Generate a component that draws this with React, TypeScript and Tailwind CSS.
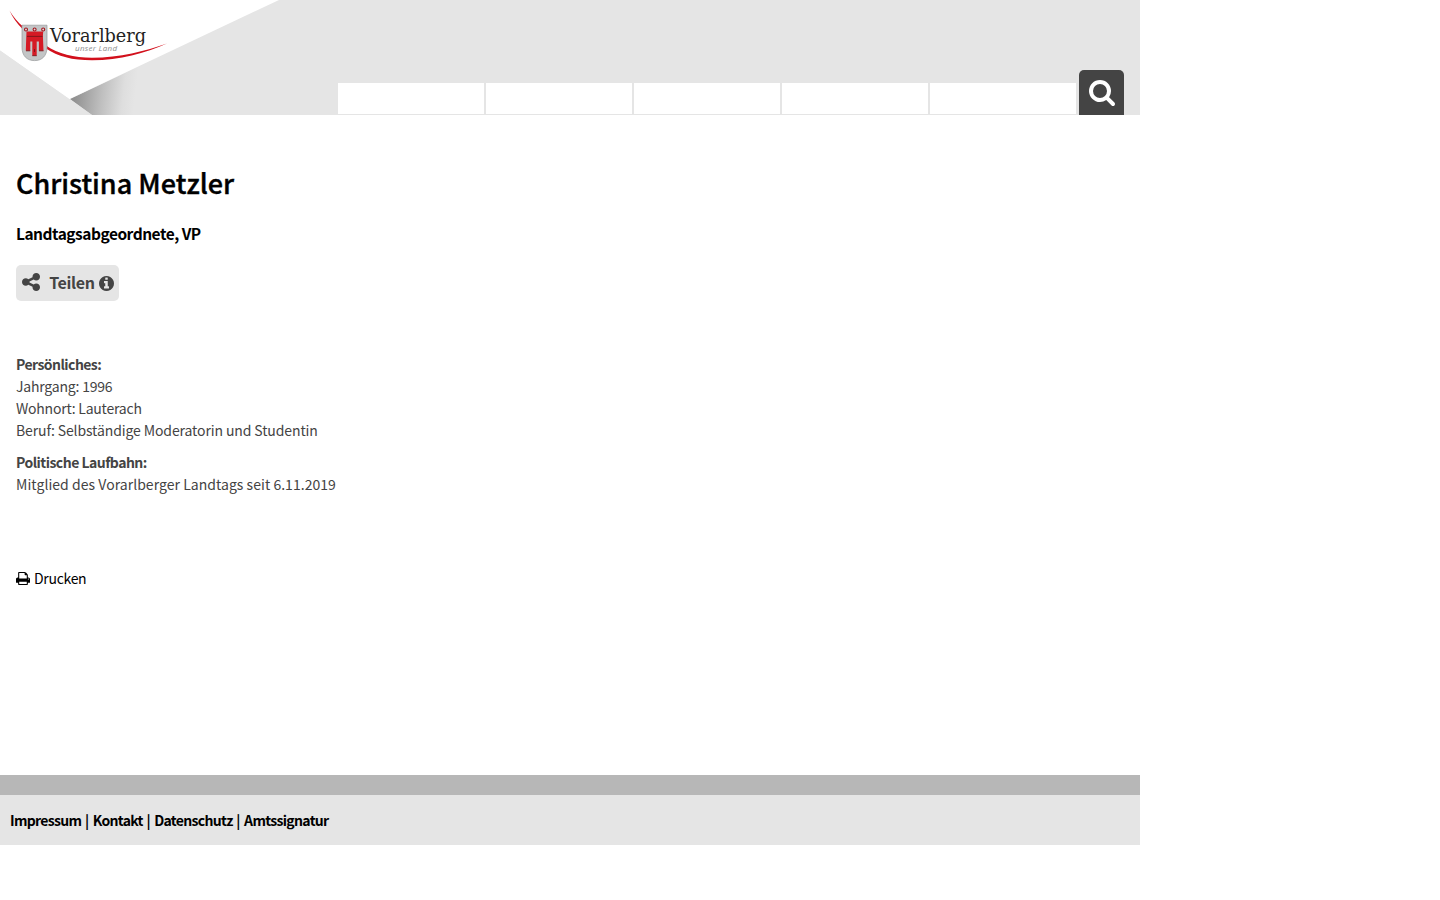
import React from 'react';

type IconProps = {
  path: string;
  viewBox: string;
  className?: string;
};

const SEARCH_PATH =
  'M1216 832q0-185-131.5-316.5t-316.5-131.5-316.5 131.5-131.5 316.5 131.5 316.5 316.5 131.5 316.5-131.5 131.5-316.5zm512 832q0 52-38 90t-90 38q-54 0-90-38l-343-342q-179 124-399 124-143 0-273.5-55.5t-225-150-150-225-55.5-273.5 55.5-273.5 150-225 225-150 273.5-55.5 273.5 55.5 225 150 150 225 55.5 273.5q0 220-124 399l343 343q37 37 37 90z';
const SHARE_PATH =
  'M1344 1024q133 0 226.5 93.5t93.5 226.5-93.5 226.5-226.5 93.5-226.5-93.5-93.5-226.5q0-12 2-34l-360-180q-92 86-218 86-133 0-226.5-93.5t-93.5-226.5 93.5-226.5 226.5-93.5q126 0 218 86l360-180q-2-22-2-34 0-133 93.5-226.5t226.5-93.5 226.5 93.5 93.5 226.5-93.5 226.5-226.5 93.5q-126 0-218-86l-360 180q2 22 2 34t-2 34l360 180q92-86 218-86z';
const INFO_PATH =
  'M1152 1376v-160q0-14-9-23t-23-9h-96v-512q0-14-9-23t-23-9h-320q-14 0-23 9t-9 23v160q0 14 9 23t23 9h96v320h-96q-14 0-23 9t-9 23v160q0 14 9 23t23 9h448q14 0 23-9t9-23zm-128-896v-160q0-14-9-23t-23-9h-192q-14 0-23 9t-9 23v160q0 14 9 23t23 9h192q14 0 23-9t9-23zm640 416q0 209-103 385.5t-279.5 279.5-385.5 103-385.5-103-279.5-279.5-103-385.5 103-385.5 279.5-279.5 385.5-103 385.5 103 279.5 279.5 103 385.5z';
const PRINT_PATH =
  'M448 1536h896v-256h-896v256zm0-640h896v-384h-160q-40 0-68-28t-28-68v-160h-640v640zm1152 64q0-26-19-45t-45-19-45 19-19 45 19 45 45 19 45-19 19-45zm128 0v416q0 13-9.5 22.5t-22.5 9.5h-224v160q0 40-28 68t-68 28h-960q-40 0-68-28t-28-68v-160h-224q-13 0-22.5-9.5t-9.5-22.5v-416q0-79 56.5-135.5t135.5-56.5h64v-544q0-40 28-68t68-28h672q40 0 88 20t76 48l152 152q28 28 48 76t20 88v256h64q79 0 135.5 56.5t56.5 135.5z';

const Icon = ({ path, viewBox, className }: IconProps) => (
  <svg viewBox={viewBox} className={className} fill="currentColor" aria-hidden="true">
    <path d={path} />
  </svg>
);

const Logo = () => (
  <svg width="280" height="115" viewBox="0 0 280 115" className="shrink-0">
    <defs>
      <linearGradient id="fold" gradientUnits="userSpaceOnUse" x1="74" y1="100" x2="134" y2="107">
        <stop offset="0" stopColor="#919191" />
        <stop offset="0.45" stopColor="#bfbfbf" />
        <stop offset="0.8" stopColor="#dedede" />
        <stop offset="1" stopColor="#e5e5e5" />
      </linearGradient>
    </defs>
    <path d="M70 99 L140 66 V115 H92 Z" fill="url(#fold)" />
    <path d="M0 0 H279 L69.5 99 L92 115 L0 50.5 Z" fill="#fff" />
    <path d="M0 50.5 L92 115 H0 Z" fill="#e5e5e5" />
    <g fill="#d2101c">
      <path d="M9.5 10.5 C13 16.5 18 22.5 23 26.5 L22.5 29 C17 23.5 12.5 17.5 9.5 10.5 Z" />
      <path d="M46 45.5 C58 54 74 57.6 92 57.7 C120 57.7 145 51 167 43.5 C145 53 120 60.3 92 60.3 C72 60.2 58 56.5 46 48.5 Z" />
    </g>
    {/* coat of arms */}
    <path d="M22 25.2 H47 V47 C47 56 42 60.6 34.6 60.6 C27 60.6 22 56 22 47 Z" fill="#c3c5c6" stroke="#96999b" strokeWidth="0.7" />
    <path
      d="M26.5 31.5 H43.2 L42.9 36 L43.5 50.8 H38.9 V41.5 H36.7 V55.7 H32.3 V41.5 H30.3 V50.8 H25.8 L26.3 36 Z"
      fill="#d51a25"
    />
    <path d="M27 36.4 H42.5 M26 50.8 H30.3 M39 50.8 H43.5 M32.3 55.7 H36.7 M34.5 49 V52" stroke="#6b1519" strokeWidth="0.8" fill="none" />
    <g fill="#ddd" stroke="#a3141c" strokeWidth="1.1">
      <circle cx="26" cy="29.5" r="1.5" />
      <circle cx="34.6" cy="29.5" r="1.5" />
      <circle cx="43.2" cy="29.5" r="1.5" />
    </g>
    <text x="50" y="41.5" textLength="96" lengthAdjust="spacingAndGlyphs" fontSize="19.2" fill="#222" className="font-['DejaVu_Serif_Condensed','DejaVu_Serif',serif]">
      Vorarlberg
    </text>
    <text x="75" y="51" textLength="42" fontSize="8" fontStyle="italic" fill="#8c8c8c" className="font-['Open_Sans',sans-serif]">
      unser Land
    </text>
  </svg>
);

const App = () => {
  const navItems = [1, 2, 3, 4, 5];
  const links = ['Impressum', 'Kontakt', 'Datenschutz', 'Amtssignatur'];

  return (
    <div className="w-[1140px] bg-white font-['Noto_Sans_CJK_SC',sans-serif] text-[14px] leading-[22px] text-[#444]">
      <header className="flex h-[115px] items-end bg-[#e5e5e5]">
        <Logo />
        <nav className="mb-px ml-[58px] flex gap-0.5">
          {navItems.map((item) => (
            <div key={item} className="h-[31px] w-[146px] bg-white" />
          ))}
        </nav>
        <button className="ml-[3px] flex h-[45px] w-[45px] items-center justify-center rounded-t-[5px] bg-[#444] text-white" aria-label="Suche">
          <Icon path={SEARCH_PATH} viewBox="64 128 1664 1664" className="h-[26px] w-[26px]" />
        </button>
      </header>

      <main className="flex h-[660px] flex-col items-start px-4 pt-[48px]">
        <h1 className="text-[27px] leading-[40px] font-medium whitespace-nowrap text-black [-webkit-text-stroke:0.4px_black]">
          Christina Metzler
        </h1>
        <h2 className="mt-[19px] text-[15.5px] leading-[22px] font-bold tracking-[-0.5px] whitespace-nowrap text-black">Landtagsabgeordnete, VP</h2>
        <button className="mt-[21px] flex h-9 w-[103px] items-center rounded-[5px] bg-[#e5e5e5] pb-0.5 pl-1.5 text-[16px] font-bold">
          <Icon path={SHARE_PATH} viewBox="128 128 1536 1536" className="h-[18px] w-[18px] shrink-0" />
          <span className="ml-[9px] w-[46px] tracking-[-0.3px]">Teilen</span>
          <Icon path={INFO_PATH} viewBox="128 128 1536 1536" className="mt-0.5 ml-1 h-[15px] w-[15px] shrink-0" />
        </button>

        <section className="mt-[52px] whitespace-nowrap">
          <p className="font-bold tracking-[-0.55px]">Persönliches:</p>
          <p className="tracking-[-0.2px]">Jahrgang: 1996</p>
          <p className="tracking-[-0.22px]">Wohnort: Lauterach</p>
          <p className="tracking-[-0.11px]">Beruf: Selbständige Moderatorin und Studentin</p>
        </section>
        <section className="mt-2.5 whitespace-nowrap">
          <p className="font-bold tracking-[-0.52px]">Politische Laufbahn:</p>
          <p className="tracking-[0.04px]">Mitglied des Vorarlberger Landtags seit 6.11.2019</p>
        </section>

        <a className="mt-[72px] flex items-center gap-1 text-black">
          <Icon path={PRINT_PATH} viewBox="64 128 1664 1536" className="h-[13px] w-[14px]" />
          <span className="tracking-[-0.3px]">Drucken</span>
        </a>
      </main>

      <footer>
        <div className="h-5 bg-[#b7b7b7]" />
        <div className="flex h-[50px] items-center bg-[#e5e5e5] px-2.5 font-bold text-black">
          {links.map((link, i) => (
            <React.Fragment key={link}>
              {i > 0 && <span className="w-[11.4px] text-center">|</span>}
              <span className="tracking-[-0.68px]">{link}</span>
            </React.Fragment>
          ))}
        </div>
      </footer>
    </div>
  );
};

export default App;
